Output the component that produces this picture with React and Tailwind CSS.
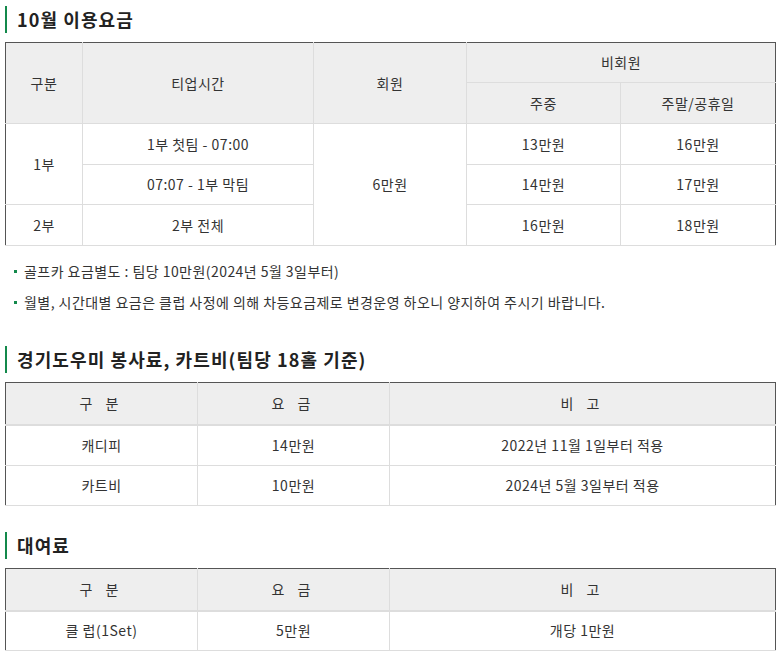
import React from "react";

const font = { fontFamily: '"Noto Sans CJK KR", "Noto Sans", sans-serif' };

function Heading({ children }) {
  return (
    <div className="flex items-center h-[27px] border-l-2 border-[#13894b] pl-[10px] mb-[9px]">
      <h2 className="text-[18px] font-bold text-[#222] leading-[27px] tracking-[1.1px]">{children}</h2>
    </div>
  );
}

const th = "bg-[#eeeeee] border border-[#dddddd] text-[14px] font-normal text-[#333] text-center align-middle p-0";
const td = "border border-[#dddddd] text-[14px] text-[#333] text-center align-middle p-0 tracking-[0.5px]";

export default function App() {
  return (
    <div className="bg-white w-[782px] h-[660px] px-[5px] pt-[6px] overflow-hidden" style={font}>
      <Heading>10월 이용요금</Heading>
      <table className="w-[770px] table-fixed border-collapse border-t border-t-[#555] border-l border-l-[#555] border-r border-r-[#555]">
        <colgroup>
          <col className="w-[77px]" />
          <col className="w-[231px]" />
          <col className="w-[153px]" />
          <col className="w-[154px]" />
          <col className="w-[155px]" />
        </colgroup>
        <thead>
          <tr className="h-[40px]">
            <th rowSpan={2} className={th + " border-l-[#555] border-t-[#555] tracking-[0.5px]"}>구분</th>
            <th rowSpan={2} className={th + " border-t-[#555] tracking-[0.5px]"}>티업시간</th>
            <th rowSpan={2} className={th + " border-t-[#555] tracking-[0.5px]"}>회원</th>
            <th colSpan={2} className={th + " border-t-[#555] border-r-[#555] tracking-[0.5px]"}>비회원</th>
          </tr>
          <tr className="h-[41px]">
            <th className={th + " tracking-[0.5px]"}>주중</th>
            <th className={th + " border-r-[#555] tracking-[0.5px]"}>주말/공휴일</th>
          </tr>
        </thead>
        <tbody>
          <tr className="h-[41px]">
            <td rowSpan={2} className={td + " border-l-[#555]"}>1부</td>
            <td className={td}>1부 첫팀 - 07:00</td>
            <td rowSpan={3} className={td}>6만원</td>
            <td className={td}>13만원</td>
            <td className={td + " border-r-[#555]"}>16만원</td>
          </tr>
          <tr className="h-[40px]">
            <td className={td}>07:07 - 1부 막팀</td>
            <td className={td}>14만원</td>
            <td className={td + " border-r-[#555]"}>17만원</td>
          </tr>
          <tr className="h-[41px]">
            <td className={td + " border-l-[#555]"}>2부</td>
            <td className={td}>2부 전체</td>
            <td className={td}>16만원</td>
            <td className={td + " border-r-[#555]"}>18만원</td>
          </tr>
        </tbody>
      </table>

      <ul className="mt-[14px] flex flex-col gap-[9px]">
        <li className="flex items-center h-[22px] pl-[9px] text-[14px] text-[#333] leading-[22px] tracking-[0.45px]">
          <span className="w-[3px] h-[3px] bg-[#13894b] mr-[7px] shrink-0" />
          골프카 요금별도 : 팀당 10만원(2024년 5월 3일부터)
        </li>
        <li className="flex items-center h-[22px] pl-[9px] text-[14px] text-[#333] leading-[22px] tracking-[0.45px]">
          <span className="w-[3px] h-[3px] bg-[#13894b] mr-[7px] shrink-0" />
          월별, 시간대별 요금은 클럽 사정에 의해 차등요금제로 변경운영 하오니 양지하여 주시기 바랍니다.
        </li>
      </ul>

      <div className="mt-[33px]">
        <Heading>경기도우미 봉사료, 카트비(팀당 18홀 기준)</Heading>
        <table className="w-[770px] table-fixed border-collapse border-t border-t-[#555] border-l border-l-[#555] border-r border-r-[#555]">
          <colgroup>
            <col className="w-[192px]" />
            <col className="w-[192px]" />
            <col className="w-[386px]" />
          </colgroup>
          <thead>
            <tr className="h-[42px]">
              <th className={th + " border-t-[#555] border-l-[#555] border-b-2 tracking-[5px]"}>구 분</th>
              <th className={th + " border-t-[#555] border-b-2 tracking-[5px]"}>요 금</th>
              <th className={th + " border-t-[#555] border-r-[#555] border-b-2 tracking-[5px]"}>비 고</th>
            </tr>
          </thead>
          <tbody>
            <tr className="h-[41px]">
              <td className={td + " border-l-[#555]"}>캐디피</td>
              <td className={td}>14만원</td>
              <td className={td + " border-r-[#555]"}>2022년 11월 1일부터 적용</td>
            </tr>
            <tr className="h-[40px]">
              <td className={td + " border-l-[#555]"}>카트비</td>
              <td className={td}>10만원</td>
              <td className={td + " border-r-[#555]"}>2024년 5월 3일부터 적용</td>
            </tr>
          </tbody>
        </table>
      </div>

      <div className="mt-[26px]">
        <Heading>대여료</Heading>
        <table className="w-[770px] table-fixed border-collapse border-t border-t-[#555] border-l border-l-[#555] border-r border-r-[#555]">
          <colgroup>
            <col className="w-[192px]" />
            <col className="w-[192px]" />
            <col className="w-[386px]" />
          </colgroup>
          <thead>
            <tr className="h-[42px]">
              <th className={th + " border-t-[#555] border-l-[#555] border-b-2 tracking-[5px]"}>구 분</th>
              <th className={th + " border-t-[#555] border-b-2 tracking-[5px]"}>요 금</th>
              <th className={th + " border-t-[#555] border-r-[#555] border-b-2 tracking-[5px]"}>비 고</th>
            </tr>
          </thead>
          <tbody>
            <tr className="h-[40px]">
              <td className={td + " border-l-[#555]"}>클 럽(1Set)</td>
              <td className={td}>5만원</td>
              <td className={td + " border-r-[#555]"}>개당 1만원</td>
            </tr>
          </tbody>
        </table>
      </div>
    </div>
  );
}
